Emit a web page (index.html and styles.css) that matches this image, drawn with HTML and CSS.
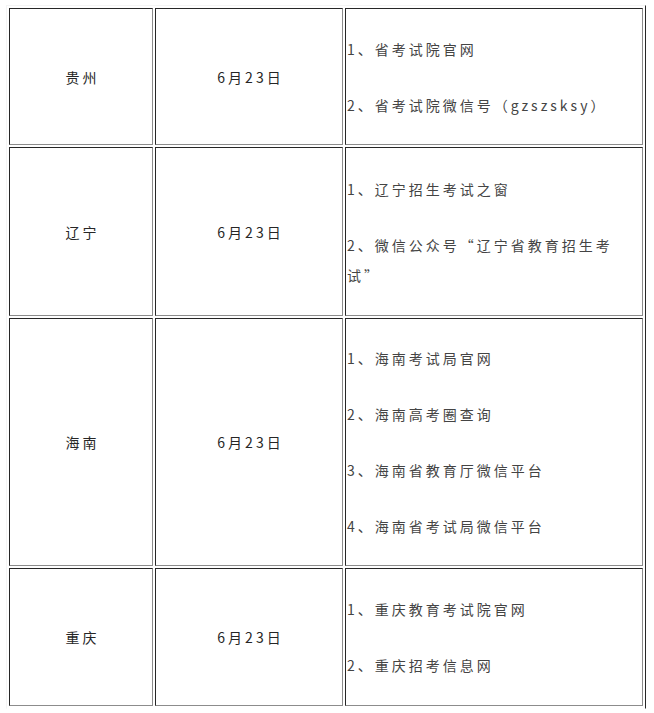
FILE: index.html
```html
<!DOCTYPE html>
<html lang="zh-CN">
<head>
<meta charset="utf-8">
<title>查询渠道</title>
<link rel="stylesheet" href="styles.css">
</head>
<body>
<div class="table">
  <div class="cell center">贵州</div>
  <div class="cell center">6月23日</div>
  <div class="cell list">
    <p>1、省考试院官网</p>
    <p>2、省考试院微信号（gzszsksy）</p>
  </div>

  <div class="cell center">辽宁</div>
  <div class="cell center">6月23日</div>
  <div class="cell list">
    <p>1、辽宁招生考试之窗</p>
    <p>2、微信公众号“辽宁省教育招生考试”</p>
  </div>

  <div class="cell center">海南</div>
  <div class="cell center">6月23日</div>
  <div class="cell list">
    <p>1、海南考试局官网</p>
    <p>2、海南高考圈查询</p>
    <p>3、海南省教育厅微信平台</p>
    <p>4、海南省考试局微信平台</p>
  </div>

  <div class="cell center">重庆</div>
  <div class="cell center">6月23日</div>
  <div class="cell list">
    <p>1、重庆教育考试院官网</p>
    <p>2、重庆招考信息网</p>
  </div>
</div>
</body>
</html>
```

FILE: styles.css
```css
html, body {
  margin: 0;
  padding: 0;
  background: #ffffff;
}

body {
  font-family: "Noto Sans CJK SC", "Liberation Sans", sans-serif;
  font-size: 14px;
  letter-spacing: 3px;
  color: #333333;
}

.table {
  display: grid;
  grid-template-columns: 144px 188px 298px;
  grid-template-rows: 137px 169px 248px 138px;
  gap: 2px;
  padding: 2px;
  margin: 5px 0 0 6px;
  width: max-content;
  border: 1px solid;
  border-color: #f4f4f4 #262626 transparent #f4f4f4;
}

.cell {
  box-sizing: border-box;
  border: 1px solid;
  border-color: #262626 #8c8c8c #8c8c8c #262626;
  display: flex;
}

.center {
  align-items: center;
  justify-content: center;
  padding-left: 3px;
  color: #262626;
}

.list {
  flex-direction: column;
  justify-content: center;
  padding: 0 20px 0 1px;
  color: #444444;
}

.list p {
  margin: 0;
  line-height: 30px;
}

.list p + p {
  margin-top: 26px;
}
```
